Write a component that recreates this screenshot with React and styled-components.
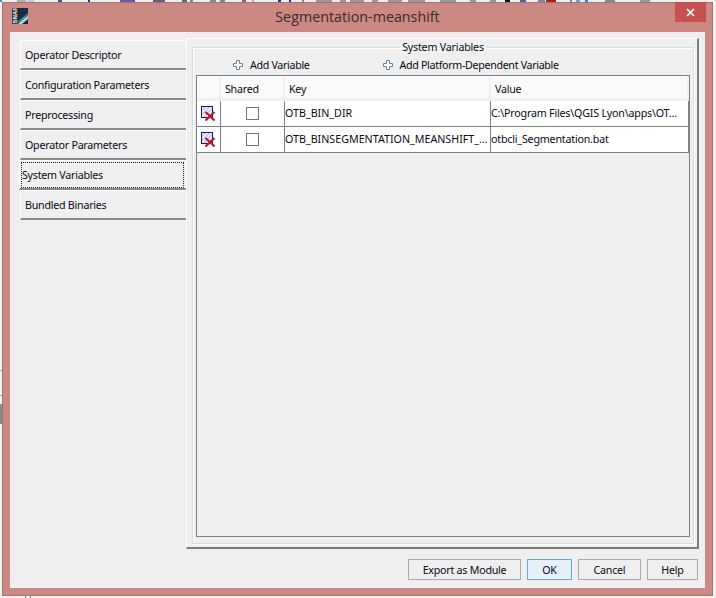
import React from "react";
import styled, { createGlobalStyle } from "styled-components";

const noise = [
  [0, 2, "#3a8fd8"], [17, 26, "#b0b0b8"], [27, 34, "#c8c8d8"], [58, 62, "#5050a0"], [88, 90, "#3030a0"],
  [120, 135, "#6a5a9a"], [153, 165, "#6a5a8a"], [182, 187, "#666"], [190, 193, "#888"], [210, 216, "#888"],
  [220, 225, "#8080a0"], [242, 246, "#a06060"], [252, 254, "#b0a0e0"], [278, 281, "#3030a0"], [289, 291, "#3030a0"],
  [302, 304, "#888"], [316, 332, "#999"], [340, 346, "#999"], [350, 364, "#999"], [372, 378, "#999"],
  [388, 402, "#999"], [408, 425, "#999"], [440, 456, "#999"], [470, 476, "#999"], [490, 496, "#999"],
  [505, 510, "#111"], [520, 526, "#6a5a9a"], [538, 545, "#8a7ab0"], [546, 552, "#a02020"], [552, 556, "#c01010"],
  [570, 572, "#5090d0"], [576, 580, "#7aa0d0"], [585, 588, "#3090e0"], [605, 615, "#888"], [640, 650, "#999"],
];
let stops = [];
let last = 0;
noise.forEach(([a, b, c]) => {
  stops.push(`#eee ${last}px ${a}px`, `${c} ${a}px ${b}px`);
  last = b;
});
stops.push(`#eee ${last}px 716px`);
const strip = `linear-gradient(90deg, ${stops.join(", ")})`;

const Global = createGlobalStyle`
  html, body { margin: 0; padding: 0; background: #f2f2f2; }
  body {
    width: 716px; height: 598px; overflow: hidden; font-family: "Noto Sans", "Liberation Sans", sans-serif;
    letter-spacing: -0.25px;
  }
`;
const Screen = styled.div`
  width: 716px; height: 598px; box-sizing: border-box; padding: 2px 3px 2px 2px;
  background:
    ${strip} 0 0 / 716px 2px no-repeat,
    linear-gradient(#8a8a92, #8a8a92) 25px 596px / 1px 2px no-repeat,
    linear-gradient(#8a8a92, #8a8a92) 30px 596px / 1px 2px no-repeat,
    linear-gradient(#9a9aa0, #9a9aa0) 0 370px / 2px 1px no-repeat,
    linear-gradient(#9a9aa0, #9a9aa0) 0 395px / 2px 1px no-repeat,
    linear-gradient(#8a8a92, #8a8a92) 0 404px / 2px 20px no-repeat,
    #f2f2f2;
`;
const Win = styled.div`
  width: 711px; height: 594px; box-sizing: border-box; background: #cc8883;
  border: 1px solid #a27470; display: flex; flex-direction: column;
  padding: 0 7px 7px 7px;
`;
const TitleBar = styled.div`
  height: 29px; flex: none; position: relative; display: flex; align-items: center; justify-content: center;
`;
const Title = styled.div`
  font-family: "Open Sans", sans-serif; font-size: 14.3px; letter-spacing: 0; color: #3a2a2a; padding-bottom: 2px;
`;
const LogoBox = styled.svg`
  position: absolute; left: 2px; top: 5px; width: 16px; height: 16px;
`;
const Close = styled.div`
  position: absolute; right: -1px; top: -1px; width: 31px; height: 20px; background: #c75050;
  display: flex; align-items: center; justify-content: center;
`;
const Client = styled.div`
  flex: 1; background: #efefef; display: flex; flex-direction: column; min-height: 0;
`;
const Body = styled.div`
  flex: none; height: 511px; padding: 6px 7px 0 10px; display: flex;
`;
const Side = styled.div`
  width: 166px; padding-top: 2px; flex: none; display: flex; flex-direction: column;
`;
const Tab = styled.div`
  height: 30px; box-sizing: border-box; padding: 0 0 0 4px; display: flex; align-items: center;
  font-size: 10.7px; color: #0a0a14;
  border-top: 1px solid #fff; border-left: 1px solid #fff; border-bottom: 2px solid #8a8a8a;
  border-radius: 2px 0 0 0;
`;
const ActiveTab = styled.div`
  height: 30px; box-sizing: border-box; padding: 0 0 0 2px; margin-left: -1px;
  display: flex; align-items: center; font-size: 10.7px; color: #0a0a14; border-top: 1px solid #fff;
  border-left: 1px solid #fff; outline: 1px dotted #222; outline-offset: -3px;
  border-bottom: 2px solid #8a8a8a;
`;
const Panel = styled.div`
  flex: 1; box-sizing: border-box; height: 511px; padding: 2px 3px 3px 5px; background: #efefef;
  border-top: 1px solid #fff; border-left: 1px solid #fff; border-right: 2px solid #7e7e7e; border-bottom: 2px solid #7e7e7e;
`;
const Group = styled.fieldset`
  margin: 0; box-sizing: border-box; height: 503px; padding: 0 3px 6px 3px; border: 1px solid #dcdcdc;
  box-shadow: 1px 1px 0 #fff, inset 1px 1px 0 #fff;
  display: flex; flex-direction: column;
`;
const Legend = styled.legend`
  padding: 0 2px; margin: 0 auto; font-size: 10.7px; color: #0a0a14; line-height: 13px; letter-spacing: -0.2px;
`;
const Actions = styled.div`
  height: 21px; flex: none; display: flex; align-items: center; padding-left: 37px; gap: 73px;
`;
const Action = styled.div`
  display: flex; align-items: center; gap: 7px; font-size: 10.7px; color: #0a0a14; letter-spacing: -0.33px;
  svg { flex: none; }
`;
const TableBox = styled.div`
  flex: 1; border: 1px solid #7e8288; background: #efefef; min-height: 0;
`;
const Row = styled.div`
  display: grid; grid-template-columns: 24px 64px 206px 198px; background: ${p => (p.$head ? "#fafafa" : "#fff")};
  height: ${p => (p.$head ? 25 : 26)}px; box-sizing: border-box;
  border-bottom: ${p => (p.$head ? "0" : "1px solid #808080")};
`;
const HeadCell = styled.div`
  display: flex; align-items: center; font-size: 10.7px; color: #0a0a14; padding: 4px 0 0 4px;
  border-right: 2px solid #eef0f4; border-bottom: 3px solid #eef0f4; box-sizing: border-box;
`;
const Cell = styled.div`
  display: flex; align-items: center; justify-content: ${p => (p.$center ? "center" : "flex-start")};
  font-size: 10.7px; color: #0a0a14; padding-bottom: ${p => (p.$center ? 0 : 2)}px; box-sizing: border-box;
  letter-spacing: ${p => (p.$caps ? "0" : "-0.2px")};
  border-right: 1px solid #808080; white-space: nowrap; overflow: hidden;
`;
const Check = styled.div`
  width: 13px; height: 13px; box-sizing: border-box; background: #fff; border: 1px solid #767676;
`;
const Footer = styled.div`
  flex: 1; display: flex; justify-content: flex-end; align-items: flex-start; gap: 6px; padding: 10px 7px 0 0;
`;
const Btn = styled.div`
  height: 21px; box-sizing: border-box; width: ${p => p.$w}px; display: flex; align-items: center; justify-content: center;
  font-size: 10.7px; color: #0a0a14; background: ${p => (p.$primary ? "#e5f0fa" : "#efefef")};
  border: 1px solid ${p => (p.$primary ? "#5fa8e8" : "#acacac")};
`;
const LogoText = styled.text`
  font-family: "Liberation Sans", sans-serif; font-size: 6px; font-weight: 700; fill: #f0f0f0; letter-spacing: 0;
`;

const Plus = () => (
  <svg width="10" height="10" viewBox="0 0 10 10">
    <path d="M3.5 .5h3v3h3v3h-3v3h-3v-3h-3v-3h3z" fill="#fff" stroke="#5c86a8" strokeWidth="1" />
  </svg>
);
const Del = ({ id }) => (
  <svg width="16" height="16" viewBox="0 0 16 16">
    <defs>
      <pattern id={id} width="3" height="3" patternUnits="userSpaceOnUse" patternTransform="rotate(45)">
        <rect width="3" height="3" fill="#fff" />
        <rect width="1.4" height="3" fill="#b4b4ea" />
      </pattern>
    </defs>
    <rect x=".5" y=".5" width="11" height="11" fill={`url(#${id})`} stroke="#14147a" />
    <path d="M4.5 6l9 8.5M13.5 6l-9 8.5" stroke="#b81c22" strokeWidth="2.2" />
  </svg>
);
const Logo = () => (
  <LogoBox viewBox="0 0 16 16">
    <rect width="16" height="16" fill="#1c2430" />
    <path d="M7 0h9v5L7 13z" fill="#1b2a48" />
    <path d="M6 16L16 6v5l-6 5z" fill="#c4ccd0" />
    <path d="M6 13l10-8v3L7 15z" fill="#2f8f90" />
    <rect width="6" height="16" fill="#3a3a3e" />
    <LogoText transform="translate(5.4 15.5) rotate(-90)">SNAP</LogoText>
  </LogoBox>
);

export default function App() {
  return (
    <Screen>
      <Global />
      <Win>
        <TitleBar>
          <Logo />
          <Title>Segmentation-meanshift</Title>
          <Close>
            <svg width="9" height="9" viewBox="0 0 9 9"><path d="M1 1l7 7M8 1l-7 7" stroke="#fff" strokeWidth="1.6" /></svg>
          </Close>
        </TitleBar>
        <Client>
          <Body>
            <Side>
              <Tab>Operator Descriptor</Tab>
              <Tab>Configuration Parameters</Tab>
              <Tab>Preprocessing</Tab>
              <Tab>Operator Parameters</Tab>
              <ActiveTab>System Variables</ActiveTab>
              <Tab>Bundled Binaries</Tab>
            </Side>
            <Panel>
              <Group>
                <Legend>System Variables</Legend>
                <Actions>
                  <Action><Plus />Add Variable</Action>
                  <Action><Plus />Add Platform-Dependent Variable</Action>
                </Actions>
                <TableBox>
                  <Row $head>
                    <HeadCell />
                    <HeadCell>Shared</HeadCell>
                    <HeadCell>Key</HeadCell>
                    <HeadCell>Value</HeadCell>
                  </Row>
                  <Row>
                    <Cell $center><Del id="h1" /></Cell>
                    <Cell $center><Check /></Cell>
                    <Cell $caps>OTB_BIN_DIR</Cell>
                    <Cell>C:\Program Files\QGIS Lyon\apps\OT…</Cell>
                  </Row>
                  <Row>
                    <Cell $center><Del id="h2" /></Cell>
                    <Cell $center><Check /></Cell>
                    <Cell $caps>OTB_BINSEGMENTATION_MEANSHIFT_…</Cell>
                    <Cell>otbcli_Segmentation.bat</Cell>
                  </Row>
                </TableBox>
              </Group>
            </Panel>
          </Body>
          <Footer>
            <Btn $w={113}>Export as Module</Btn>
            <Btn $w={45} $primary>OK</Btn>
            <Btn $w={63}>Cancel</Btn>
            <Btn $w={51}>Help</Btn>
          </Footer>
        </Client>
      </Win>
    </Screen>
  );
}
